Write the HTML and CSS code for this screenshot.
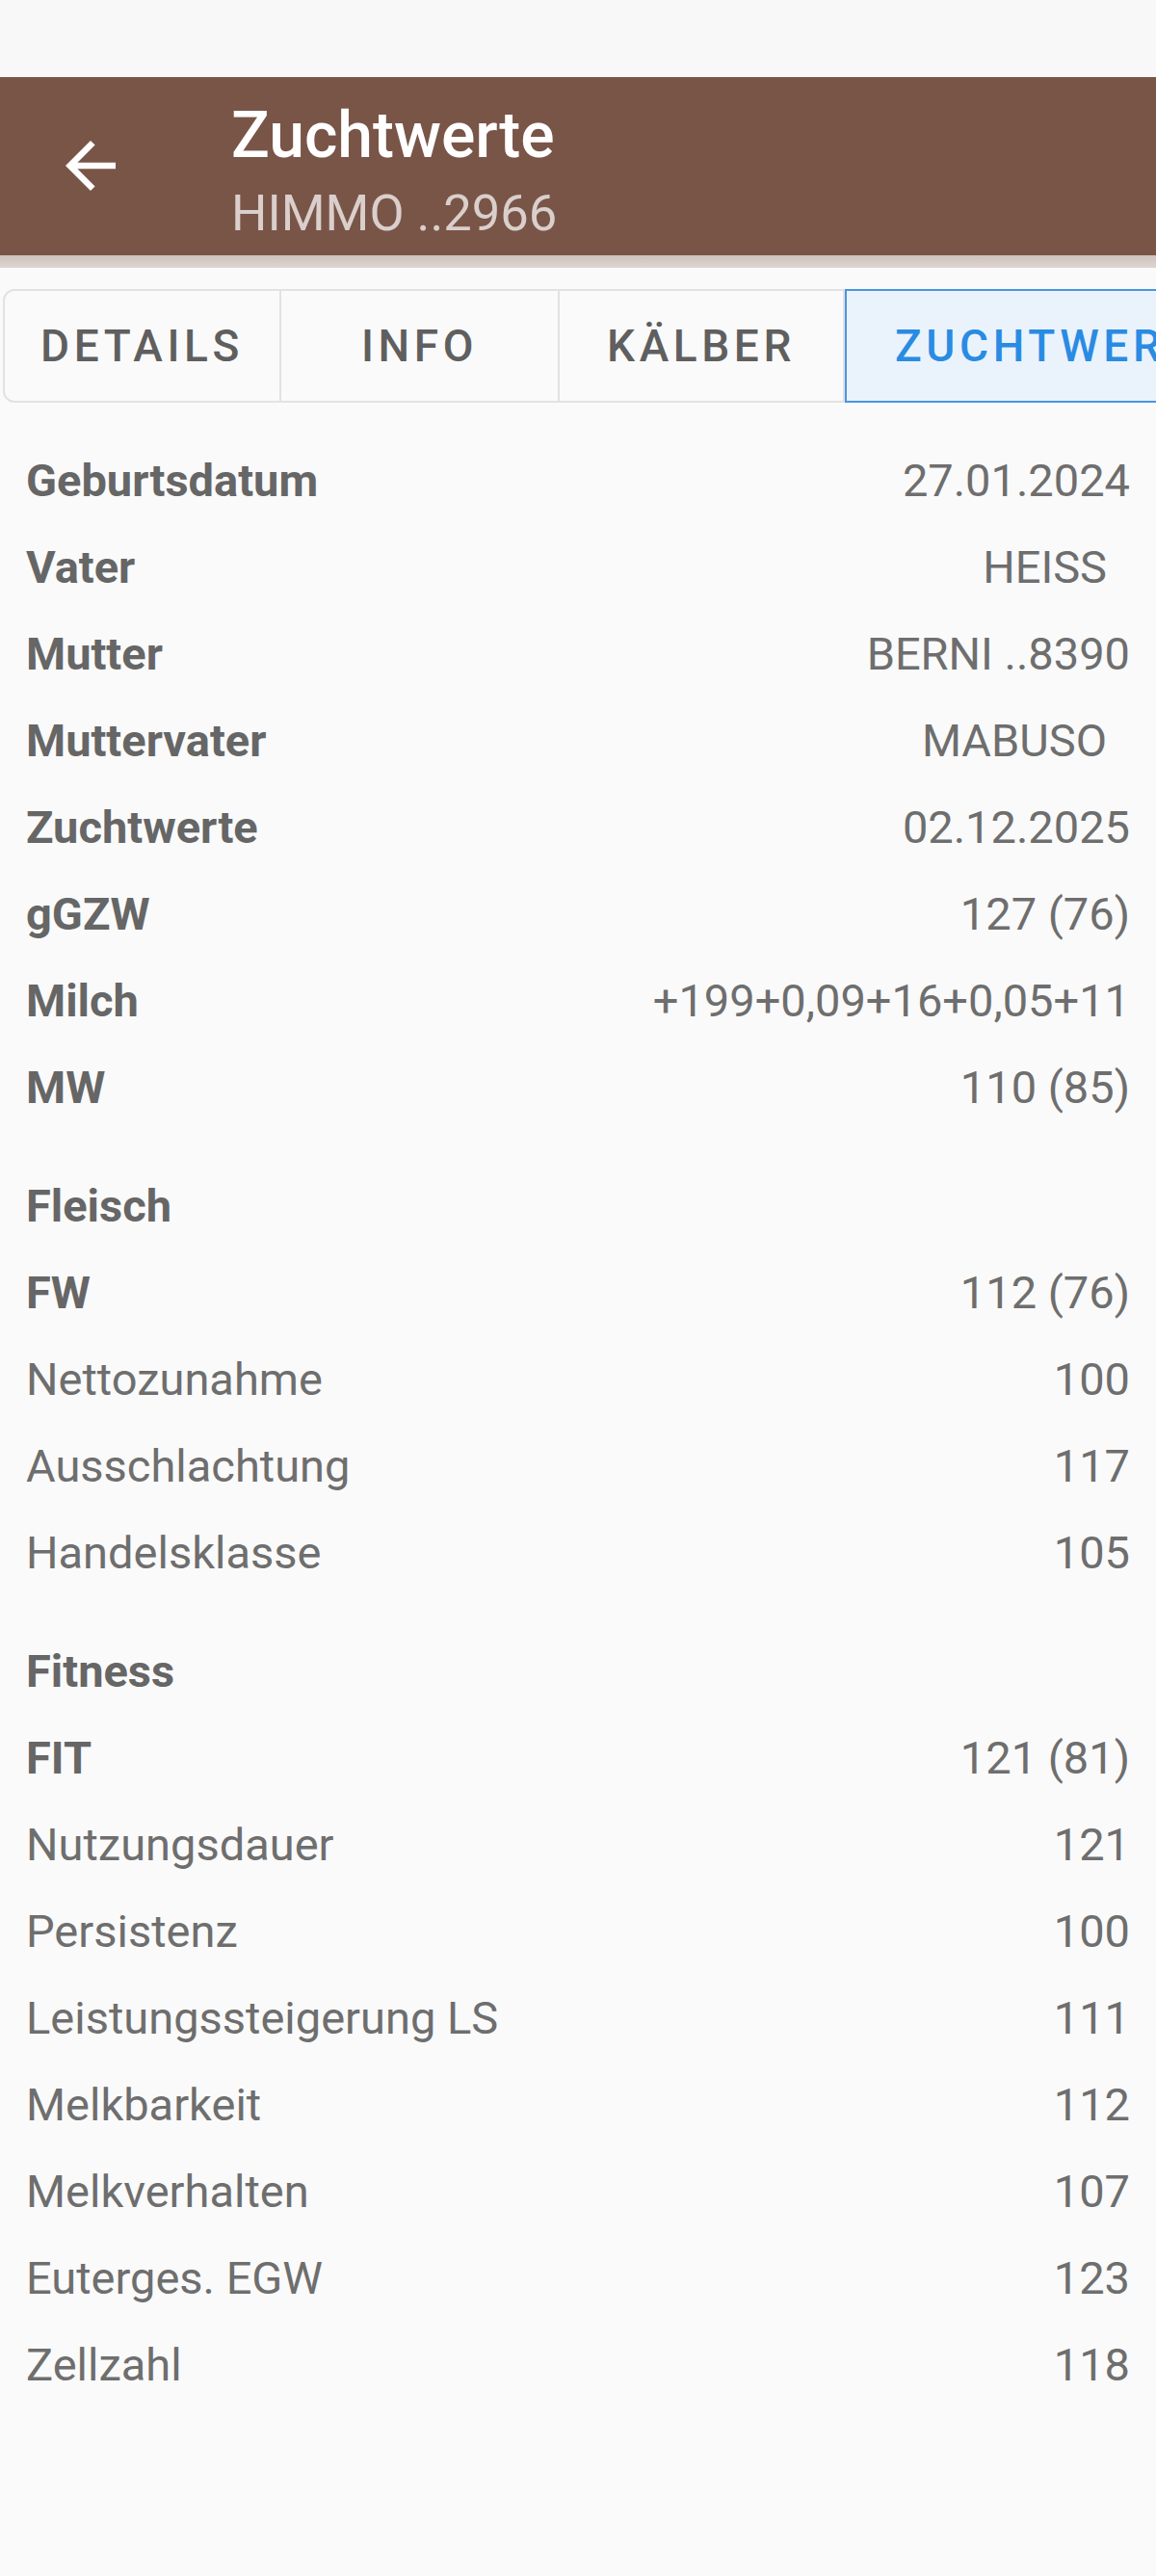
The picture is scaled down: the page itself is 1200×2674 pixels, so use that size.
FILE: index.html
```html
<!DOCTYPE html>
<html lang="de">
<head>
<meta charset="utf-8">
<title>Zuchtwerte</title>
<link rel="stylesheet" href="styles.css">
</head>
<body>
<div class="page">
  <div class="statusbar"></div>
  <header class="appbar">
    <div class="back">
      <svg viewBox="0 0 24 24" width="78" height="78"><path fill="#ffffff" d="M20 11H7.83l5.59-5.59L12 4l-8 8 8 8 1.41-1.41L7.83 13H20v-2z"/></svg>
    </div>
    <div class="titles">
      <div class="title">Zuchtwerte</div>
      <div class="subtitle">HIMMO ..2966</div>
    </div>
  </header>
  <div class="appbar-shadow"></div>
  <nav class="tabs">
    <div class="tab tab-details">DETAILS</div>
    <div class="tab tab-info">INFO</div>
    <div class="tab tab-kaelber">KÄLBER</div>
    <div class="tab tab-zw active">ZUCHTWERTE</div>
  </nav>
  <main class="list">
    <div class="row"><span class="label bold">Geburtsdatum</span><span class="value">27.01.2024</span></div>
    <div class="row"><span class="label bold">Vater</span><span class="value trail">HEISS</span></div>
    <div class="row"><span class="label bold">Mutter</span><span class="value">BERNI ..8390</span></div>
    <div class="row"><span class="label bold">Muttervater</span><span class="value trail">MABUSO</span></div>
    <div class="row"><span class="label bold">Zuchtwerte</span><span class="value">02.12.2025</span></div>
    <div class="row"><span class="label bold">gGZW</span><span class="value">127 (76)</span></div>
    <div class="row"><span class="label bold">Milch</span><span class="value">+199+0,09+16+0,05+11</span></div>
    <div class="row"><span class="label bold">MW</span><span class="value">110 (85)</span></div>

    <div class="row group"><span class="label bold">Fleisch</span></div>
    <div class="row"><span class="label bold">FW</span><span class="value">112 (76)</span></div>
    <div class="row"><span class="label">Nettozunahme</span><span class="value">100</span></div>
    <div class="row"><span class="label">Ausschlachtung</span><span class="value">117</span></div>
    <div class="row"><span class="label">Handelsklasse</span><span class="value">105</span></div>

    <div class="row group"><span class="label bold">Fitness</span></div>
    <div class="row"><span class="label bold">FIT</span><span class="value">121 (81)</span></div>
    <div class="row"><span class="label">Nutzungsdauer</span><span class="value">121</span></div>
    <div class="row"><span class="label">Persistenz</span><span class="value">100</span></div>
    <div class="row"><span class="label">Leistungssteigerung LS</span><span class="value">111</span></div>
    <div class="row"><span class="label">Melkbarkeit</span><span class="value">112</span></div>
    <div class="row"><span class="label">Melkverhalten</span><span class="value">107</span></div>
    <div class="row"><span class="label">Euterges. EGW</span><span class="value">123</span></div>
    <div class="row"><span class="label">Zellzahl</span><span class="value">118</span></div>
  </main>
</div>
</body>
</html>
```
FILE: styles.css
```css
* { box-sizing: border-box; }
html, body {
  margin: 0;
  padding: 0;
  background: #fafafa;
}
body {
  font-family: "Roboto", "Liberation Sans", sans-serif;
  overflow-x: hidden;
}
.page {
  width: 1200px;
  min-height: 2674px;
  background: #fafafa;
  overflow: hidden;
}
.statusbar {
  height: 80px;
  background: #f8f8f8;
}
.appbar {
  height: 185px;
  background: #795548;
  display: flex;
  align-items: flex-start;
}
.back {
  width: 240px;
  flex: none;
  padding-left: 55px;
  padding-top: 53px;
}
.back svg { display: block; }
.titles {
  display: flex;
  flex-direction: column;
  padding-top: 23px;
}
.title {
  font-size: 66px;
  line-height: 76px;
  font-weight: 500;
  color: #ffffff;
}
.subtitle {
  margin-top: 12px;
  font-size: 52.5px;
  line-height: 60px;
  font-weight: 400;
  color: rgba(255, 255, 255, 0.72);
}
.appbar-shadow {
  height: 13px;
  background: linear-gradient(#cfc2bd, #ddd4d1);
}
.tabs {
  margin-top: 22px;
  margin-left: 3px;
  display: flex;
  height: 118px;
  width: 1300px;
}
.tab {
  flex: none;
  display: flex;
  align-items: center;
  justify-content: center;
  font-size: 46px;
  font-weight: 500;
  letter-spacing: 4.6px;
  color: #5f5f5f;
  border-top: 2px solid #e2e2e2;
  border-bottom: 2px solid #e2e2e2;
  border-right: 2px solid #e2e2e2;
  background: #fafafa;
}
.tab-details {
  width: 289px;
  border-left: 2px solid #e2e2e2;
  border-radius: 12px 0 0 12px;
}
.tab-info { width: 289px; }
.tab-kaelber { width: 296px; }
.tab-zw {
  justify-content: flex-start;
  padding-left: 50px;
  width: 500px;
}
.tab.active {
  color: #2a8be3;
  background: #eaf3fc;
  border: 2px solid #4a95de;
}
.list {
  padding-top: 35px;
}
.row {
  height: 90px;
  padding: 0 27px;
  display: flex;
  align-items: center;
  justify-content: space-between;
  font-size: 47px;
  color: #6a6a6a;
}
.row.group {
  margin-top: 33px;
}
.label { font-weight: 400; color: #6e6e6e; }
.label.bold { font-weight: 700; color: #666666; }
.value { font-weight: 400; color: #6e6e6e; }
.value.trail { padding-right: 24px; }
```
